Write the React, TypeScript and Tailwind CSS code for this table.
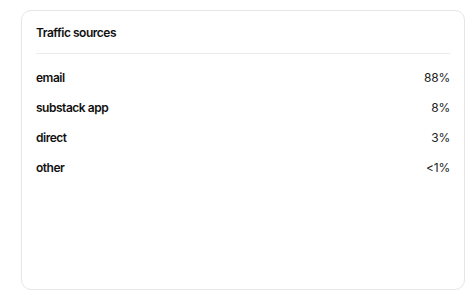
const sources = [
  { label: 'email', value: '88%' },
  { label: 'substack app', value: '8%' },
  { label: 'direct', value: '3%' },
  { label: 'other', value: '<1%' },
];

export default function App() {
  return (
    <div className="w-[474px] h-[304px] bg-white pt-[10px] pl-[21px] font-['Inter',sans-serif] text-[#111]">
      <div className="w-[444px] h-[280px] rounded-[10px] border border-[#e6e6e6] px-[14px]">
        <div className="h-[43px] pt-[14px] border-b border-[#ececec]">
          <h2 className="text-[12px] leading-[16px] font-semibold tracking-[-0.04em]">Traffic sources</h2>
        </div>
        <ul className="pt-[9px]">
          {sources.map((s) => (
            <li key={s.label} className="flex items-center justify-between h-[30px] text-[12px]">
              <span className="font-semibold tracking-[-0.04em]">{s.label}</span>
              <span className="text-[#222] tracking-[-0.02em]">{s.value}</span>
            </li>
          ))}
        </ul>
      </div>
    </div>
  );
}
